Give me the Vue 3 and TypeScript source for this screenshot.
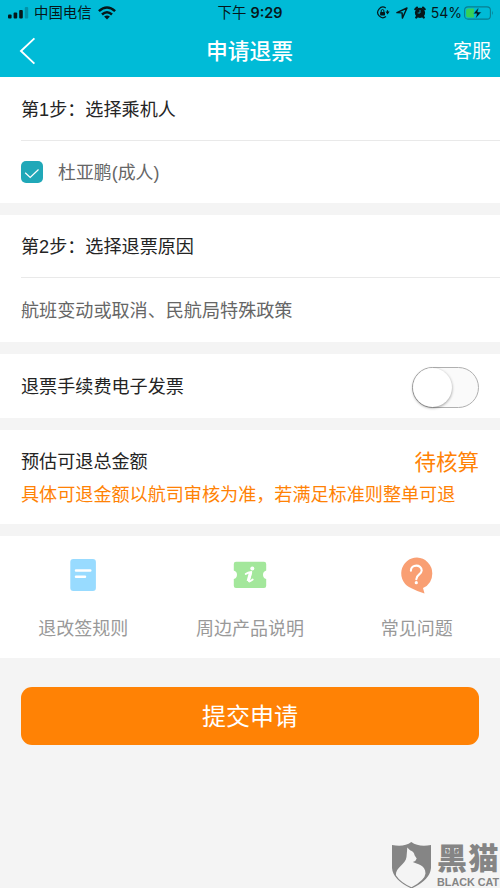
<script setup lang="ts">
import { ref } from 'vue'

interface HelpLink {
  id: 'rules' | 'product' | 'faq'
  label: string
}

const passengerChecked = ref(true)
const invoiceEnabled = ref(false)

const links: HelpLink[] = [
  { id: 'rules', label: '退改签规则' },
  { id: 'product', label: '周边产品说明' },
  { id: 'faq', label: '常见问题' },
]
</script>

<template>
  <div class="page">
    <header class="top">
      <div class="status">
        <div class="status-left">
          <svg class="signal" width="21" height="12" viewBox="0 0 21 12">
            <rect x="0" y="7.5" width="3.6" height="4" rx="1" />
            <rect x="5.6" y="5.5" width="3.6" height="6" rx="1" />
            <rect x="11.2" y="3" width="3.6" height="8.5" rx="1" />
            <rect x="16.8" y="0" width="3.4" height="11.5" rx="1" opacity=".25" />
          </svg>
          <span class="carrier">中国电信</span>
          <svg class="wifi" width="18" height="14" viewBox="0 0 18 14">
            <g fill="none" stroke="#06171a" stroke-width="2.5">
              <path d="M.9 5.2Q9-2.3 17.1 5.2" />
              <path d="M4 8.5Q9 4 14 8.5" />
            </g>
            <path d="M6.1 10.6Q9 8.3 11.9 10.6L9 13.5Z" fill="#06171a" />
          </svg>
        </div>
        <div class="time">下午 <b>9:29</b></div>
        <div class="status-right">
          <svg class="lock" width="14" height="13" viewBox="0 0 14 13">
            <path d="M9.8 2A5.2 5.2 0 1 0 10 10.6M11.3 4.2Q11.8 5.5 11.6 6.8" fill="none" stroke="#06171a" stroke-width="1.2" />
            <path d="M9.5 5.6h4.1l-2.1 2.8z" fill="#06171a" />
            <rect x="4.1" y="5.9" width="4.9" height="3.5" rx=".6" fill="#06171a" />
            <path d="M5.2 6V4.9a1.35 1.35 0 0 1 2.7 0V6" fill="none" stroke="#06171a" />
          </svg>
          <svg class="arrow" width="12" height="12" viewBox="0 0 12 12">
            <path d="M.9 5.6 11 1 6.4 11.1 6.1 5.9Z" fill="none" stroke="#06171a" stroke-width="1.4" stroke-linejoin="round" />
          </svg>
          <svg class="alarm" width="12" height="13" viewBox="0 0 12 13">
            <circle cx="6" cy="6.8" r="5.1" fill="#06171a" />
            <path d="M1.3 3.2 3 1.6M9 1.6l1.7 1.6M2.2 11.5l1.2-1.4M9.8 11.5l-1.2-1.4" stroke="#06171a" stroke-width="2.2" stroke-linecap="round" />
            <path d="M6 4v3H3.7" fill="none" stroke="#00bbd7" stroke-width=".8" />
          </svg>
          <span class="percent">54%</span>
          <svg class="battery" width="30" height="14" viewBox="0 0 30 14">
            <rect x=".6" y=".9" width="25.8" height="12.2" rx="3.4" fill="none" stroke="#087f91" stroke-width="1.1" />
            <path d="M4.3 2.4H10v9.2H4.3A2.2 2.2 0 0 1 2.1 9.4V4.6a2.2 2.2 0 0 1 2.2-2.2Z" fill="#36d058" />
            <path d="M14.8 1.3 9.3 7.8h3.5l-1.3 5L17.4 6h-3.7Z" fill="#06171a" stroke="#00bbd7" stroke-width=".5" />
            <path d="M28 4.8q1.7 2.2 0 4.4z" fill="#087f91" />
          </svg>
        </div>
      </div>
      <nav class="nav">
        <button class="back" aria-label="返回">
          <svg width="18" height="28" viewBox="0 0 18 28">
            <path d="M15.4 1.4 2 14 15.4 26.6" fill="none" stroke="#fff" stroke-width="1.9" />
          </svg>
        </button>
        <h1>申请退票</h1>
        <a class="service">客服</a>
      </nav>
    </header>

    <main>
      <section class="card">
        <h2 class="step step-one">第1步：选择乘机人</h2>
        <label class="passenger" @click="passengerChecked = !passengerChecked">
          <span class="check" :class="{ off: !passengerChecked }">
            <svg width="22" height="22" viewBox="0 0 22 22">
              <path d="M4.2 11.7 9.2 16.5 17.5 8.5" fill="none" stroke="#fff" stroke-width="1.2" />
            </svg>
          </span>
          <span class="name">杜亚鹏(成人)</span>
        </label>
      </section>

      <section class="card">
        <h2 class="step step-two">第2步：选择退票原因</h2>
        <p class="reason">航班变动或取消、民航局特殊政策</p>
      </section>

      <section class="card invoice">
        <span>退票手续费电子发票</span>
        <button class="switch" :class="{ on: invoiceEnabled }" role="switch" :aria-checked="invoiceEnabled" @click="invoiceEnabled = !invoiceEnabled">
          <span class="knob"></span>
        </button>
      </section>

      <section class="card refund">
        <div class="refund-row">
          <span>预估可退总金额</span>
          <strong>待核算</strong>
        </div>
        <p class="note">具体可退金额以航司审核为准，若满足标准则整单可退</p>
      </section>

      <section class="card links">
        <a v-for="link in links" :key="link.id" class="link">
          <svg v-if="link.id === 'rules'" width="40" height="40" viewBox="0 0 40 40">
            <rect x="7.3" y="4" width="25.6" height="32" rx="3" fill="#98dbff" />
            <path d="M13 15.5h14.3M13 21.7h9" stroke="#fff" stroke-width="2.5" stroke-linecap="round" />
          </svg>
          <svg v-else-if="link.id === 'product'" width="40" height="40" viewBox="0 0 40 40">
            <path d="M6 6.8h28a2.2 2.2 0 0 1 2.2 2.2V15.4a4.5 4.5 0 0 0 0 8.6V30.800a2.2 2.2 0 0 1-2.2 2.2H6A2.2 2.2 0 0 1 3.8 30.800V24a4.500 4.500 0 0 0 0-8.600V9A2.200 2.200 0 0 1 6 6.800Z" fill="#a3e79b" />
            <circle cx="22.300" cy="13.400" r="2" fill="#fff" />
            <path d="M15.700 19Q18 17.400 21.300 17L18.700 25.600Q18.700 27.800 22.700 24.600" fill="none" stroke="#fff" stroke-width="1.900" stroke-linejoin="round" stroke-linecap="round" />
            <path d="M20.500 17.700 18.200 26.200" stroke="#fff" stroke-width="3.200" />
          </svg>
          <svg v-else width="40" height="40" viewBox="0 0 40 40">
            <path d="M20 2.600A15.800 15.800 0 0 0 14.500 33.200Q19.500 36 27.500 38.500L26 33Q35.300 28.600 35.300 18.400A15.800 15.800 0 0 0 20 2.600Z" fill="#f99f73" />
            <path d="M13.900 15.700C13.900 9 24.700 9 24.700 15.600C24.700 19.400 19.300 19.600 19.300 24.300" fill="none" stroke="#fff" stroke-width="2.100" stroke-linecap="round" />
            <circle cx="19.300" cy="27.700" r="1.600" fill="#fff" />
          </svg>
          <span>{{ link.label }}</span>
        </a>
      </section>

      <button class="submit">提交申请</button>
    </main>

    <div class="watermark">
      <svg width="41" height="47" viewBox="0 0 41 47">
        <path d="M1 3Q13 5.500 20.300 0 28 5.500 40 3V26Q39 38 20.500 46.500 2 38 1 26Z" fill="#858585" />
        <path d="M16.300 5.500 19 8.200Q22.800 9 23.700 13.500L25.700 16.500Q25 19.300 21.800 20C26 22 34.500 22.500 34.500 31.500Q34 38 20.500 45.300 9.500 40.500 4.900 33.300C4.500 25 14.500 23 15.500 15Z" fill="#f4f4f4" />
      </svg>
      <div class="brand">
        <span class="brand-cn">黑猫</span>
        <span class="brand-en">BLACK CAT</span>
      </div>
    </div>
  </div>
</template>

<style>
body {
  margin: 0;
  background: #f4f4f4;
}
</style>

<style scoped>
.page {
  position: relative;
  height: 888px;
  overflow: hidden;
  background: #f4f4f4;
  color: #242424;
  font: 18.1px/26px "Liberation Sans", "Noto Sans CJK SC", sans-serif;
}
button {
  border: 0;
  padding: 0;
  font: inherit;
}
h1, h2, p {
  margin: 0;
  font-weight: 400;
}
svg {
  display: block;
  flex: none;
}
.top {
  height: 77px;
  background: #00bbd7;
}
.status {
  display: grid;
  grid-template-columns: 1fr auto 1fr;
  align-items: center;
  height: 25px;
  color: #06171a;
  font: 14.4px/25px Inter, "Noto Sans CJK SC", sans-serif;
}
.status-left, .status-right {
  display: flex;
  align-items: center;
}
.status-left {
  padding-left: 8px;
}
.signal {
  fill: #06171a;
  margin-top: 1px;
}
.carrier {
  margin: 0 6px 0 5px;
}
.time b {
  font-weight: 600;
}
.status-right {
  justify-content: flex-end;
  padding-right: 6px;
}
.arrow {
  margin-left: 6px;
}
.alarm {
  margin: 0 5px 0 6px;
}
.percent {
  margin-right: 2px;
  font-size: 14px;
}
.nav {
  display: grid;
  grid-template-columns: 1fr auto 1fr;
  align-items: center;
  height: 52px;
  padding: 0 9px 0 19px;
  color: #fff;
}
.back {
  justify-self: start;
  background: none;
}
.nav h1 {
  margin: 1px 0 0 -11px;
  font-size: 21.8px;
  font-weight: 500;
}
.service {
  justify-self: end;
  margin-top: 2px;
  font-size: 19px;
}
.card {
  background: #fff;
  margin-bottom: 12px;
}
.step {
  box-sizing: border-box;
  margin-left: 21px;
  border-bottom: 1px solid #e9e9e9;
  font-size: 18.1px;
}
.step-one {
  height: 64px;
  line-height: 66px;
}
.step-two {
  height: 63px;
  line-height: 64px;
}
.passenger {
  display: flex;
  align-items: center;
  gap: 15px;
  height: 61px;
  padding: 0 0 1px 21px;
  color: #666;
}
.passenger .name {
  padding-top: 2px;
  font-size: 17.9px;
}
.check {
  width: 22px;
  height: 22px;
  border-radius: 5px;
  background: #20a8b8;
}
.check.off {
  background: #ddd;
}
.reason {
  height: 64px;
  padding-left: 21px;
  line-height: 67px;
  color: #666;
}
.invoice {
  display: flex;
  align-items: center;
  justify-content: space-between;
  height: 64px;
  padding: 0 21px;
}
.invoice > span {
  padding-top: 2px;
}
.switch {
  box-sizing: border-box;
  display: flex;
  width: 67px;
  height: 41px;
  margin-top: 3px;
  border: 1px solid #b0b0b0;
  border-radius: 21px;
  background: #fafafa;
}
.switch.on {
  justify-content: flex-end;
  background: #20a8b8;
}
.knob {
  width: 39px;
  height: 39px;
  border-radius: 50%;
  background: #fff;
  box-shadow: 0 1px 3px rgba(0, 0, 0, .4);
}
.refund {
  box-sizing: border-box;
  height: 94px;
  padding: 16px 21px 0;
}
.refund-row {
  display: flex;
  align-items: center;
  justify-content: space-between;
  height: 32px;
}
.refund strong {
  padding-top: 2px;
  color: #ff8205;
  font-size: 21.5px;
  font-weight: 400;
}
.note {
  padding-top: 1px;
  color: #ff8205;
  line-height: 32px;
  white-space: nowrap;
}
.links {
  display: grid;
  grid-template-columns: repeat(3, 1fr);
  height: 122px;
}
.link {
  display: flex;
  flex-direction: column;
  align-items: center;
  padding-top: 19px;
  gap: 21px;
  color: #999;
  font-size: 18px;
}
.submit {
  display: block;
  width: 458px;
  height: 58px;
  margin: 29px auto 0;
  padding-top: 2px;
  border-radius: 11px;
  background: #ff8205;
  color: #fff;
  font-size: 24px;
}
.watermark {
  position: absolute;
  left: 391px;
  top: 842px;
  display: flex;
  gap: 5px;
  color: #858585;
}
.brand {
  display: flex;
  flex-direction: column;
}
.brand-cn {
  height: 34px;
  font-size: 30px;
  font-weight: 900;
  line-height: 34px;
  letter-spacing: 1.5px;
}
.brand-en {
  height: 11px;
  padding-top: 1px;
  font: 700 10.8px/11px "Liberation Sans", sans-serif;
  white-space: nowrap;
}
</style>
